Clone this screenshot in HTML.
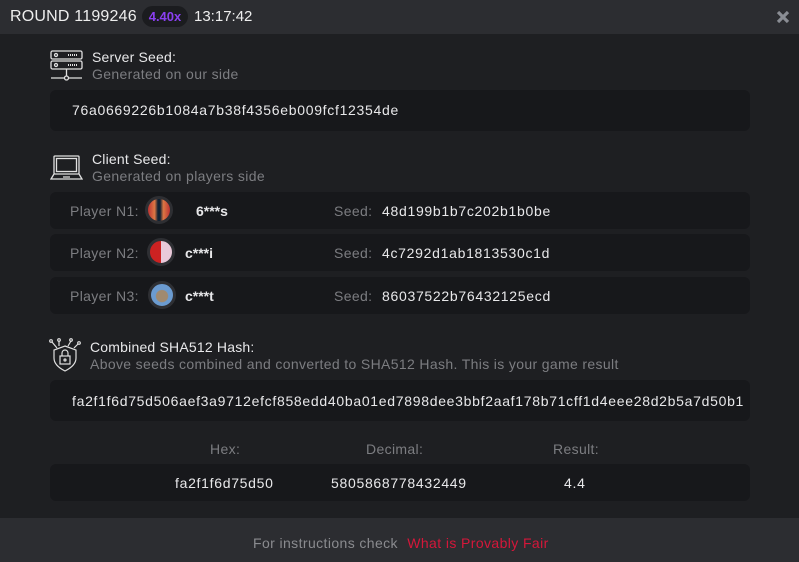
<!DOCTYPE html>
<html><head><meta charset="utf-8"><style>
*{margin:0;padding:0;box-sizing:border-box}
body{width:799px;height:562px;background:#1e1f22;font-family:"Liberation Sans",sans-serif;color:#e8e8ea;position:relative;overflow:hidden;font-size:14px}
.hdr{position:absolute;left:0;top:0;width:799px;height:34px;background:#2c2d31}
.abs{position:absolute;white-space:nowrap}
.box{position:absolute;left:50px;width:700px;background:#17181b;border-radius:6px}
.grey{color:#7c7d81;letter-spacing:0.35px}
.v{letter-spacing:0.7px}
.av{position:absolute;width:28px;height:28px;border-radius:50%;border:3px solid #2e2f33}
.foot{position:absolute;left:0;top:518px;width:799px;height:44px;background:#2c2d31}
</style></head><body>
<div class="hdr">
<div class="abs" style="left:10px;top:8px;font-size:16px;color:#eee;letter-spacing:0.2px">ROUND 1199246</div>
<div class="abs" style="left:142px;top:6px;height:21px;width:46px;border-radius:11px;background:#1b1c1f;color:#8a3ff0;font-weight:bold;font-size:13px;text-align:center;line-height:21px">4.40x</div>
<div class="abs" style="left:194px;top:8px;font-size:15px;color:#eee">13:17:42</div>
<svg class="abs" style="left:776px;top:10px" width="14" height="14" viewBox="0 0 14 14"><path d="M2 2L12 12M12 2L2 12" stroke="#8a8d94" stroke-width="3.2"/></svg>
</div>

<svg class="abs" style="left:50px;top:50px" width="33" height="32" viewBox="0 0 33 32" fill="none" stroke="#e0e0e0" stroke-width="1.3"><rect x="1" y="1" width="31" height="8" rx="1.5"/><rect x="1" y="11" width="31" height="8" rx="1.5"/><circle cx="6" cy="5" r="1.5"/><circle cx="6" cy="15" r="1.5"/><path d="M18 5h10M18 15h10" stroke-width="2" stroke-dasharray="1 1"/><path d="M16.5 19v7M1 28h13M19 28h13"/><circle cx="16.5" cy="28" r="2"/></svg>
<div class="abs" style="left:92px;top:49px;letter-spacing:0.2px">Server Seed:</div>
<div class="abs grey" style="left:92px;top:66px">Generated on our side</div>
<div class="box" style="top:90px;height:41px"><div class="abs v" style="left:22px;top:12px">76a0669226b1084a7b38f4356eb009fcf12354de</div></div>

<svg class="abs" style="left:50px;top:155px" width="33" height="26" viewBox="0 0 33 26" fill="none" stroke="#e0e0e0" stroke-width="1.3"><rect x="4" y="1" width="25" height="18" rx="1"/><rect x="6.5" y="3.5" width="20" height="13"/><path d="M4 19L1 24h31l-3-5M13 22h7"/></svg>
<div class="abs" style="left:92px;top:151px;letter-spacing:0.2px">Client Seed:</div>
<div class="abs grey" style="left:92px;top:168px">Generated on players side</div>

<div class="box" style="top:192px;height:37px">
<div class="abs grey" style="left:20px;top:11px">Player N1:</div>
<div class="av" style="left:95px;top:4px;background:linear-gradient(90deg,#b33 0,#d74 30%,#123 45%,#123 55%,#d74 70%,#b33)"></div>
<div class="abs" style="left:146px;top:11px;font-weight:bold">6***s</div>
<div class="abs grey" style="left:284px;top:11px">Seed:</div>
<div class="abs v" style="left:332px;top:11px">48d199b1b7c202b1b0be</div></div>
<div class="box" style="top:234px;height:37px">
<div class="abs grey" style="left:20px;top:11px">Player N2:</div>
<div class="av" style="left:97px;top:4px;background:linear-gradient(90deg,#c22 0,#c22 50%,#e9c9d9 50%)"></div>
<div class="abs" style="left:135px;top:11px;font-weight:bold">c***i</div>
<div class="abs grey" style="left:284px;top:11px">Seed:</div>
<div class="abs v" style="left:332px;top:11px">4c7292d1ab1813530c1d</div></div>
<div class="box" style="top:277px;height:37px">
<div class="abs grey" style="left:20px;top:11px">Player N3:</div>
<div class="av" style="left:98px;top:4px;background:radial-gradient(circle at 50% 55%,#a08a70 0,#a08a70 35%,#6b9bd0 40%)"></div>
<div class="abs" style="left:135px;top:11px;font-weight:bold">c***t</div>
<div class="abs grey" style="left:284px;top:11px">Seed:</div>
<div class="abs v" style="left:332px;top:11px">86037522b76432125ecd</div></div>

<svg class="abs" style="left:49px;top:338px" width="32" height="34" viewBox="0 0 32 34" fill="none" stroke="#e0e0e0" stroke-width="1.2"><circle cx="2" cy="3" r="1.3"/><circle cx="10" cy="2" r="1.3"/><circle cx="22" cy="2" r="1.3"/><circle cx="30" cy="5" r="1.3"/><path d="M3 4l5 6M10 3v5M22 3l-3 5M29 6l-4 4"/><path d="M16 8l11 4v8c0 6-5 10-11 13C10 30 5 26 5 20v-8z"/><rect x="11" y="18" width="10" height="8"/><path d="M13 18v-3a3 3 0 0 1 6 0v3"/><circle cx="16" cy="22" r="1"/></svg>
<div class="abs" style="left:90px;top:339px;letter-spacing:0.2px">Combined SHA512 Hash:</div>
<div class="abs grey" style="left:90px;top:356px">Above seeds combined and converted to SHA512 Hash. This is your game result</div>
<div class="box" style="top:380px;height:41px;overflow:hidden"><div class="abs v" style="left:22px;top:13px;width:676px;overflow:hidden">fa2f1f6d75d506aef3a9712efcf858edd40ba01ed7898dee3bbf2aaf178b71cff1d4eee28d2b5a7d50b1</div></div>

<div class="abs grey" style="left:210px;top:441px">Hex:</div>
<div class="abs grey" style="left:366px;top:441px">Decimal:</div>
<div class="abs grey" style="left:553px;top:441px">Result:</div>
<div class="box" style="top:464px;height:37px">
<div class="abs v" style="left:125px;top:11px">fa2f1f6d75d50</div>
<div class="abs v" style="left:281px;top:11px">5805868778432449</div>
<div class="abs v" style="left:514px;top:11px">4.4</div></div>

<div class="foot"><div class="abs grey" style="left:253px;top:17px;color:#8a8b8f;letter-spacing:0.4px">For instructions check <span style="color:#d5173a;margin-left:5px">What is Provably Fair</span></div></div>
</body></html>
